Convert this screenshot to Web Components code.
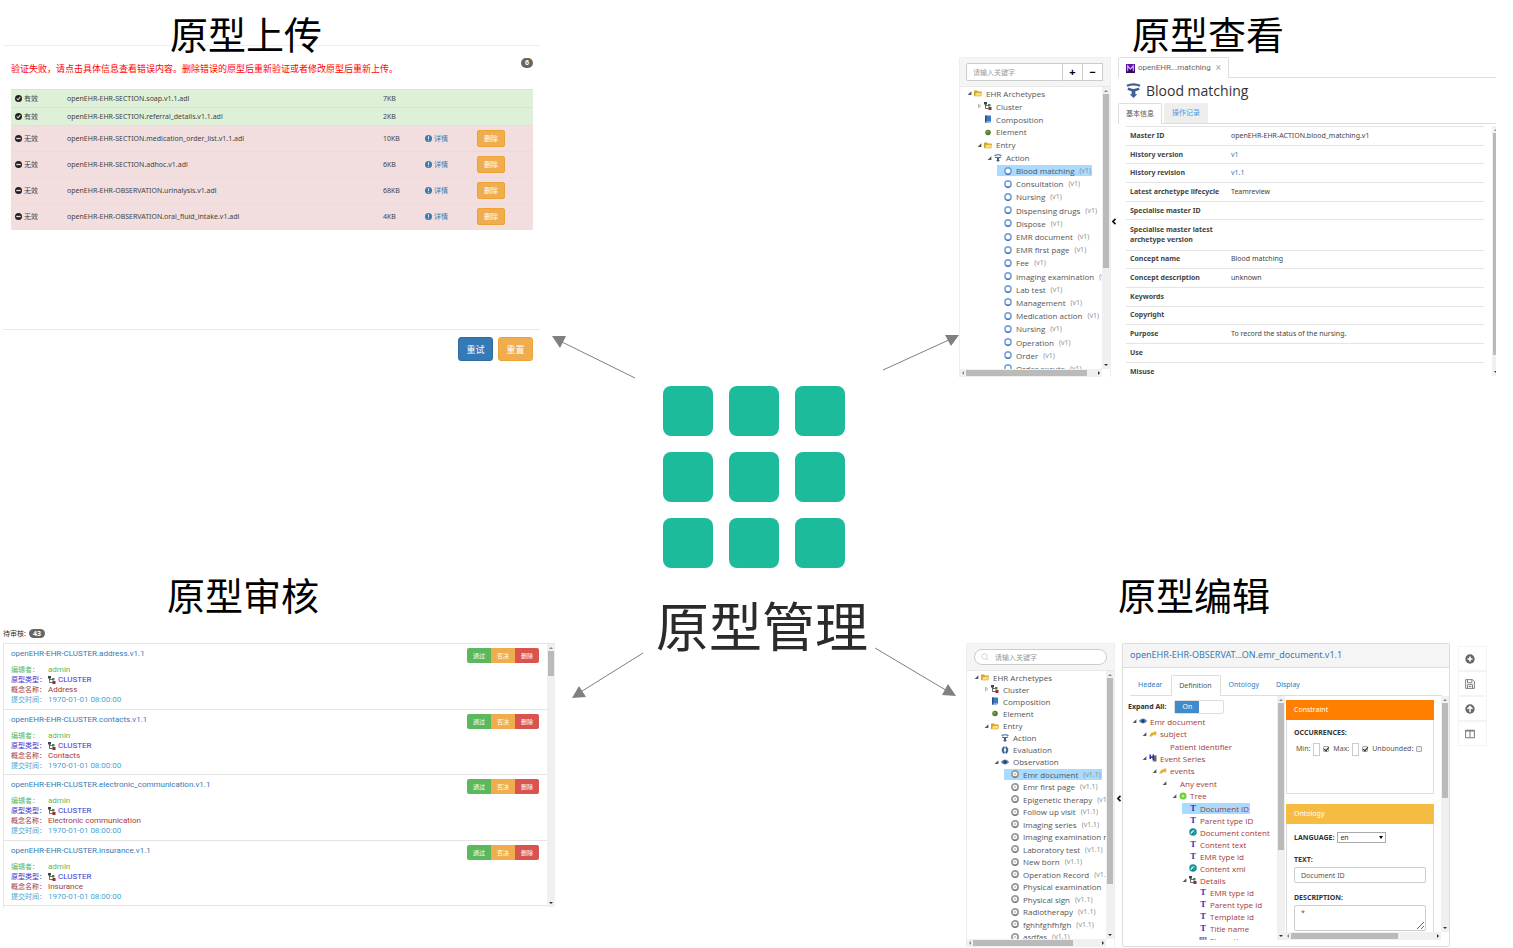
<!DOCTYPE html>
<html lang="zh-CN">
<head>
<meta charset="utf-8">
<title>原型管理</title>
<style>
  body { margin: 0; background: #fff; color: #333; font: 8px/12px "Noto Sans", "Noto Sans CJK SC", sans-serif; }
</style>
</head>
<body>
<archetype-map>
  <upload-panel slot="upload"></upload-panel>
  <view-panel slot="view"></view-panel>
  <app-grid slot="center">原型管理</app-grid>
  <review-panel slot="review"></review-panel>
  <edit-panel slot="edit"></edit-panel>
</archetype-map>

<script>
const BASE = `*{box-sizing:border-box} button,input,select,textarea{font-family:inherit;margin:0} a{color:#337ab7;text-decoration:none}`;

function define(name, css, html) {
  customElements.define(name, class extends HTMLElement {
    connectedCallback() {
      if (this.shadowRoot) return;
      const root = this.attachShadow({ mode: 'open' });
      const t = document.createElement('template');
      t.innerHTML = `<style>${BASE}${css}</style>` + (typeof html === 'function' ? html(this) : html);
      root.append(t.content.cloneNode(true));
    }
  });
}

const ICONS = {
  folder: '<path d="M0 3h6l2 2h7v3H4l-2 6H0z" fill="#d9a520"/><path d="M4 7h12l-2 7H1z" fill="#fbe07a" stroke="#c99a1b" stroke-width="1"/>',
  slot: '<path d="M0 13 5 5h4l1-2h5l-1 8-5-1-3 3z" fill="#f0b93a"/><path d="M2 12l5-5 7-1" stroke="#c98a1b" fill="none"/>',
  cluster: '<path d="M3 2v11h7M3 7h6" stroke="#444" stroke-width="1.6" fill="none"/><rect x="0" y="0" width="6" height="5" fill="#444"/><rect x="8" y="4" width="5" height="5" fill="#3a8a5a"/><rect x="9" y="10" width="6" height="6" fill="#a3262e"/>',
  book: '<path d="M2 1h12v12l-2 2H2z" fill="#3f78bd"/><path d="M2 1h3v14H2z" fill="#234f8c"/><path d="M5 13h8" stroke="#cfe0f4"/>',
  element: '<circle cx="8" cy="9" r="5.500" fill="#4f7a2c"/><circle cx="7" cy="8" r="2.500" fill="#7ea650"/>',
  action: '<path d="M1 3q7-3 14 0M2 6q6 3 12 0" stroke="#3d5f96" stroke-width="2.400" fill="none"/><path d="M6 7h4v5h2l-4 4-4-4h2z" fill="#3d5f96"/>',
  evaluation: '<path d="M6 1Q1 4 2 9t4 6l1-2q-4-5 0-10zM10 1q5 3 4 8t-4 6l-1-2q4-5 0-10z" fill="#27538f" stroke="#27538f"/>',
  eye: '<path d="M0 8q8-9 16 0-8 9-16 0z" fill="#5f87bd" stroke="#5f87bd"/><circle cx="8" cy="8" r="3.500" fill="#1d3e73"/>',
  blue: '<circle cx="8" cy="8" r="6.200" fill="#fff" stroke="#7ba4dc" stroke-width="3.200"/><path d="M3 13a7 7 0 0 0 10 0" stroke="#4a6db0" stroke-width="2" fill="none"/>',
  gray: '<circle cx="8" cy="8" r="6.200" fill="#fff" stroke="#9a9a9a" stroke-width="3.600"/><path d="M3 13a7 7 0 0 0 10 0" stroke="#777" stroke-width="2" fill="none"/><rect x="6" y="6" width="4" height="4" fill="#ccc"/>',
  series: '<path d="M1 1h3v4h3V1h3v12H7V8H4v2H1z" fill="#2230a0"/><path d="M10 3h5v12H8v-2h2z" fill="#666"/>',
  tree: '<circle cx="8" cy="8" r="7" fill="#6ccc3a"/><circle cx="8" cy="8" r="3" fill="#b9f08e"/>',
  text: '<text x="8" y="14" text-anchor="middle" font-family="Liberation Serif, serif" font-weight="bold" font-size="17" fill="#3a2fb0">T</text>',
  web: '<circle cx="8" cy="8" r="7.500" fill="#12939a"/><path d="M3 9q3-6 10-5-2 8-9 8" fill="#bff0e4"/><path d="M6 12l7-8" stroke="#15528c" stroke-width="2"/>',
  grid: '<rect x="1" y="2" width="14" height="12" fill="#6a6fc0"/><path d="M1 6h14M6 2v12M11 2v12" stroke="#fff"/>',
  ok: '<circle cx="8" cy="8" r="8" fill="#222"/><path d="M4 8l3 3 5-6" stroke="#dff0d8" stroke-width="2.400" fill="none"/>',
  minus: '<circle cx="8" cy="8" r="8" fill="#222"/><path d="M3 8h10" stroke="#f2dede" stroke-width="3"/>',
  info: '<circle cx="8" cy="8" r="8" fill="#337ab7"/><path d="M8 3v6M8 11v2" stroke="#f2dede" stroke-width="2.600"/>',
  plus: '<circle cx="8" cy="8" r="7.500" fill="#666"/><path d="M8 4v8M4 8h8" stroke="#fff" stroke-width="2.600"/>',
  up: '<circle cx="8" cy="8" r="7.500" fill="#666"/><path d="M8 13V6M4 8l4-4 4 4" stroke="#fff" stroke-width="2.400" fill="none"/>',
  save: '<path d="M1 1h11l3 3v11H1z" fill="none" stroke="#777" stroke-width="1.500"/><path d="M4 1v5h7V1M4 15V9h8v6M6 12h4" fill="none" stroke="#777" stroke-width="1.500"/>',
  columns: '<path d="M1 2h14v12H1zM8 2v12" fill="none" stroke="#777" stroke-width="1.600"/><path d="M1 3h14" stroke="#777" stroke-width="2"/>',
  chevron: '<path d="M12 1 5 8l7 7" stroke="#111" stroke-width="4.500" fill="none"/>',
  search: '<circle cx="7" cy="7" r="5.500" fill="none" stroke="#bbb" stroke-width="1.200"/><path d="M11 11l4 4" stroke="#bbb" stroke-width="1.200"/>',
  model: '<rect width="16" height="16" fill="#5a18a8"/><path d="M0 9h16v7H0z" fill="#2c0a5c"/><path d="M3 13V3l5 6 5-6v10" stroke="#d9a8ff" stroke-width="2" fill="none"/>',
  open: '<path d="M14 2v12H2z" fill="#555"/>',
  closed: '<path d="M5 2l7 6-7 6z" fill="none" stroke="#888" stroke-width="2"/>'
};

define('ui-icon',
  `:host{display:block;flex:none;width:8px;height:8px} svg{display:block;width:100%;height:100%}`,
  el => `<svg viewBox="0 0 16 16" aria-hidden="true">${ICONS[el.getAttribute('name')] || ''}</svg>`);

define('scroll-bar',
  `:host{display:flex;flex-direction:column;flex:none;width:8px;background:#f0f0f0}
   :host([across]){flex-direction:row;width:auto;height:8px}
   .track{flex:1;display:flex;flex-direction:column;min-height:0;padding:0 1px}
   :host([across]) .track{flex-direction:row;padding:1px 0}
   .thumb{background:#bababa;flex:none;height:var(--len)}
   :host([across]) .thumb{height:auto;width:var(--len)}
   svg{display:block;flex:none;width:8px;height:7px}
   :host([across]) svg{width:6px;height:8px}`,
  el => el.hasAttribute('across')
    ? `<svg viewBox="0 0 6 8"><path d="M4 2v4L2 4z" fill="#888"/></svg><div class="track"><div class="thumb"></div></div><svg viewBox="0 0 6 8"><path d="M2 2v4l2-2z" fill="#333"/></svg>`
    : `<svg viewBox="0 0 8 7"><path d="M2 5h4L4 3z" fill="#888"/></svg><div class="track"><div class="thumb"></div></div><svg viewBox="0 0 8 7"><path d="M2 2h4L4 4z" fill="#333"/></svg>`);

define('map-title',
  `:host{display:block} h2{margin:0;height:54px;font:38px/48px "Noto Sans CJK SC",sans-serif;color:#000;white-space:nowrap}`,
  '<h2><slot></slot></h2>');

define('archetype-map',
  `:host{display:grid;position:relative;grid-template-columns:555fr 404fr 554fr;grid-template-rows:1fr auto;min-height:100vh}
   .center{grid-area:1/2/3/3;padding-top:386px}
   .left{grid-column:1}.right{grid-column:3}
   .top{grid-row:1}.bottom{grid-row:2}
   div{min-width:0}
   svg{position:absolute;inset:0;width:100%;height:100%;pointer-events:none}`,
  `<div class="left top"><slot name="upload"></slot></div>
   <div class="right top"><slot name="view"></slot></div>
   <div class="center"><slot name="center"></slot></div>
   <div class="left bottom"><slot name="review"></slot></div>
   <div class="right bottom"><slot name="edit"></slot></div>
   <svg viewBox="0 0 1513 948" aria-hidden="true"><g stroke="#808080" fill="none"><path d="M635 378 560 341M883 370l68-31M643 653l-64 40M875 648l74 44"/></g>
   <g fill="#808080"><path d="M552 336h14l-6 12zM959 335h-14l6 11zM572 698l7-12 7 11zM956 696l-8-12-6 11z"/></g></svg>`);

define('app-grid',
  `:host{display:flex;flex-direction:column;align-items:center;padding-right:6px}
   .tiles{display:grid;grid-template-columns:repeat(3,50px);grid-auto-rows:50px;gap:16px}
   i{background:#1cbb9b;border-radius:8px}
   h1{margin:20px 0 0;padding-left:16px;font:53px/72px "Noto Sans CJK SC",sans-serif;color:#2b2b2b;white-space:nowrap}`,
  `<div class="tiles">${'<i></i>'.repeat(9)}</div><h1><slot></slot></h1>`);

const FILES = [
  ['openEHR-EHR-SECTION.soap.v1.1.adl', '7KB', 1],
  ['openEHR-EHR-SECTION.referral_details.v1.1.adl', '2KB', 1],
  ['openEHR-EHR-SECTION.medication_order_list.v1.1.adl', '10KB', 0],
  ['openEHR-EHR-SECTION.adhoc.v1.adl', '6KB', 0],
  ['openEHR-EHR-OBSERVATION.urinalysis.v1.adl', '68KB', 0],
  ['openEHR-EHR-OBSERVATION.oral_fluid_intake.v1.adl', '4KB', 0]
];

define('upload-panel',
  `:host{display:block;padding:0 15px 0 3px}
   map-title{height:45px;padding:9px 0 0 167px}
   .box{border-top:1px solid #eee;border-bottom:1px solid #e8e8e8;height:285px;padding:10px 7px 0 8px}
   .msg{display:flex;justify-content:space-between;align-items:flex-start;height:33px}
   p{margin:4px 0 0;font-size:9px;line-height:18px;color:#f00}
   .badge{background:#666;color:#fff;border-radius:5px;font:bold 7px/10px "Noto Sans",sans-serif;padding:0 4px;margin-top:2px}
   table{width:100%;border-collapse:collapse;table-layout:fixed;font-size:7px;line-height:10px;color:#444}
   td{padding:0;border-top:1px solid #ddd;height:26px}
   .ok td{background:#dff0d8;height:18px;border-color:#d0e9c6}
   .bad td{background:#f2dede;border-color:#e6dcdc}
   .st{display:flex;align-items:center;gap:2px;padding-left:4px}
   .st ui-icon{width:7px;height:7px}
   a{display:flex;align-items:center;gap:2px}
   a ui-icon{width:7px;height:7px}
   button{border:1px solid #eea236;background:#f0ad4e;color:#fff;border-radius:2px;padding:0}
   td button{display:block;width:28px;height:17px;font-size:7px;line-height:10px}
   .actions{display:flex;justify-content:flex-end;gap:5px;padding:7px 7px 0}
   .actions button{width:35px;height:24px;font-size:9px;border-radius:3px}
   .actions .primary{background:#337ab7;border-color:#2e6da4}`,
  `<map-title>原型上传</map-title>
   <div class="box">
    <div class="msg"><p>验证失败，请点击具体信息查看错误内容。删除错误的原型后重新验证或者修改原型后重新上传。</p><span class="badge">6</span></div>
    <table><colgroup><col style="width:56px"><col><col style="width:42px"><col style="width:52px"><col style="width:56px"></colgroup>
    ${FILES.map(([n, s, ok]) => `<tr class="${ok ? 'ok' : 'bad'}"><td><span class="st"><ui-icon name="${ok ? 'ok' : 'minus'}"></ui-icon>${ok ? '有效' : '无效'}</span></td><td>${n}</td><td>${s}</td><td>${ok ? '' : '<a href="#"><ui-icon name="info"></ui-icon>详情</a>'}</td><td>${ok ? '' : '<button type="button">删除</button>'}</td></tr>`).join('')}
    </table>
   </div>
   <div class="actions"><button type="button" class="primary">重试</button><button type="button">重置</button></div>`);

/* A tree row: [level, caret, icon, label, version, selected] */
const treeRow = ([lv, caret, icon, label, ver, sel]) =>
  `<li style="padding-left:${lv * 10}px"><span class="row${sel ? ' sel' : ''}"><ui-icon class="caret" name="${caret}"></ui-icon><ui-icon name="${icon}"></ui-icon><span class="label">${label}</span>${ver ? `<small>${ver}</small>` : ''}</span></li>`;
const TREE_CSS = `
   ul{list-style:none;margin:0;padding:0;display:flex;flex-direction:column;font-family:"Open Sans",sans-serif}
   li{flex:1 0 0;min-height:0;display:flex;align-items:center;white-space:nowrap}
   .row{display:flex;align-items:center;height:11px;line-height:11px;padding-right:1px}
   .row .caret{width:5px;height:6px;margin-right:2px}
   .row .label{margin-left:4px}
   .sel{background:#a8dbff}
   small{font-size:7px;color:#888;margin-left:5px}`;

const VIEW_TOP = [[0,'open','folder','EHR Archetypes'],[1,'closed','cluster','Cluster'],[1,'','book','Composition'],[1,'','element','Element'],[1,'open','folder','Entry'],[2,'open','action','Action']];
const VIEW_LEAF = ['Blood matching','Consultation','Nursing','Dispensing drugs','Dispose','EMR document','EMR first page','Fee','Imaging examination','Lab test','Management','Medication action','Nursing','Operation','Order','Order excute'].map((n, i) => [3,'','blue',n,'(v1)',i === 0]);
const EDIT_TOP = [[0,'open','folder','EHR Archetypes'],[1,'closed','cluster','Cluster'],[1,'','book','Composition'],[1,'','element','Element'],[1,'open','folder','Entry'],[2,'','action','Action'],[2,'','evaluation','Evaluation'],[2,'open','eye','Observation']];
const EDIT_LEAF = ['Emr document','Emr first page','Epigenetic therapy','Follow up visit','Imaging series','Imaging examination re','Laboratory test','New born','Operation Record','Physical examination','Physical sign','Radiotherapy','fghhfghfhfgh','asdfas'].map((n, i) => [3,'','gray',n,i === 5 ? '' : '(v1.1)',i === 0]);

define('tree-panel',
  `:host{display:flex;flex-direction:column;border:1px solid #eee;border-bottom:0;border-radius:2px 2px 0 0;color:#555}
   header{flex:none;background:#f5f5f5;border-bottom:1px solid #e8e8e8}
   .body{flex:1;display:flex;min-height:0}
   .view{flex:1;min-width:0;overflow:hidden;padding-left:7px}
   ${TREE_CSS}
   .g1{height:var(--g1)} .g2{height:var(--g2)}`,
  el => {
    const edit = el.hasAttribute('edit');
    return `<header><slot></slot></header><div class="body"><div class="view">
      <ul class="g1">${(edit ? EDIT_TOP : VIEW_TOP).map(treeRow).join('')}</ul>
      <ul class="g2">${(edit ? EDIT_LEAF : VIEW_LEAF).map(treeRow).join('')}</ul></div>
      <scroll-bar style="--len:${edit ? 81 : 65}%"></scroll-bar></div>
      <scroll-bar across style="--len:${edit ? 79 : 93}%;margin-right:8px"></scroll-bar>`;
  });

const META = [
  ['Master ID','openEHR-EHR-ACTION.blood_matching.v1'],['History version','<a href="#">v1</a>'],['History revision','<a href="#">v1.1</a>'],
  ['Latest archetype lifecycle','Teamreview'],['Specialise master ID',''],['Specialise master latest archetype version',''],
  ['Concept name','Blood matching'],['Concept description','unknown'],['Keywords',''],['Copyright',''],
  ['Purpose','To record the status of the nursing.'],['Use',''],['Misuse','']
];

define('view-panel',
  `:host{display:block;padding-right:17px}
   map-title{height:57px;padding:9px 0 0 173px}
   .cols{display:flex;height:320px}
   tree-panel{flex:0 0 152px;min-width:0;--g1:77px;--g2:211px}
   .find{display:flex;height:28px;padding:5px 7px 5px 6px}
   .find input{flex:1;min-width:0;border:1px solid #ccc;border-radius:2px 0 0 2px;font-size:7px;padding:0 6px;background:#fff}
   input::placeholder{color:#999}
   .find button{width:20px;border:1px solid #ccc;border-left:0;background:#fff;padding:0;font:bold 11px/14px "Noto Sans",sans-serif;color:#000}
   .split{flex:none;width:7px;display:flex;align-items:center;padding-top:8px}
   .split ui-icon{width:6px;height:7px}
   .main{flex:1;min-width:0;display:flex;flex-direction:column;height:319px}
   .file{display:flex;height:21px;border-bottom:1px solid #ddd;flex:none;font-family:Roboto,sans-serif}
   .file a{display:flex;align-items:center;gap:3px;border:1px solid #ddd;border-bottom:0;background:#fff;height:21px;padding:0 7px;color:#666;border-radius:2px 2px 0 0}
   .file b{font-weight:400;font-size:10px;color:#aaa;margin-left:2px}
   h3{display:flex;align-items:center;gap:5px;margin:0;font:14px/25px "Open Sans",sans-serif;color:#333;padding-left:8px;flex:none}
   h3 ui-icon{width:15px;height:15px}
   nav{display:flex;gap:2px;height:21px;border-bottom:1px solid #ddd;flex:none}
   nav a{width:44px;text-align:center;font-size:7px;line-height:20px;height:20px;background:#eee;color:#4a9ce0;border-radius:2px 2px 0 0}
   nav a.on{background:#fff;color:#555;border:1px solid #ddd;border-bottom:0;height:21px}
   .scroll{flex:1;min-height:0;display:flex;margin-top:2px}
   .data{flex:1;min-width:0;overflow:hidden;padding:0 8px}
   table{width:100%;height:255px;border-collapse:collapse;font-size:7px;line-height:10px;color:#444}
   th{width:105px;text-align:left;padding:0 4px;border-top:1px solid #e4e4e4}
   td{padding:0;border-top:1px solid #e4e4e4}
   .side{width:4px;overflow:hidden;flex:none}
   .side scroll-bar{height:100%}`,
  `<map-title>原型查看</map-title>
   <div class="cols">
    <tree-panel><div class="find"><input type="text" placeholder="请输入关键字" aria-label="关键字"><button type="button">+</button><button type="button">−</button></div></tree-panel>
    <div class="split"><ui-icon name="chevron"></ui-icon></div>
    <div class="main">
     <div class="file"><a href="#"><ui-icon name="model" style="width:9px;height:9px"></ui-icon>openEHR...matching <b>×</b></a></div>
     <h3><ui-icon name="action"></ui-icon>Blood matching</h3>
     <nav><a href="#" class="on">基本信息</a><a href="#">操作记录</a></nav>
     <div class="scroll"><div class="data"><table>${META.map(([k, v], i) => `<tr style="height:${i === 5 ? 29 : 18}px"><th scope="row">${k}</th><td>${v}</td></tr>`).join('')}</table></div>
     <div class="side"><scroll-bar style="--len:94%"></scroll-bar></div></div>
    </div>
   </div>`);

const REVIEWS = [['address','Address'],['contacts','Contacts'],['electronic_communication','Electronic communication'],['insurance','Insurance']];

define('review-panel',
  `:host{display:block;padding-left:3px}
   map-title{padding-left:164px}
   .count{display:flex;align-items:center;gap:3px;height:19px;font-size:7px}
   .count b{background:#666;color:#fff;border-radius:5px;font-size:7px;line-height:9px;padding:0 4px}
   .list{display:flex;height:265px;border:1px solid #e4e4e4;border-right:0;border-bottom-color:transparent;font-family:Roboto,"Noto Sans CJK SC",sans-serif}
   .items{flex:1;display:flex;flex-direction:column}
   article{flex:0 0 66px;display:flex;justify-content:space-between;align-items:flex-start;border-bottom:1px solid #e4e4e4;padding:4px 8px 0 7px}
   article:nth-child(even){flex-basis:65px}
   .name{display:block;font-size:8px;line-height:11px;margin-bottom:6px}
   dl{margin:0;display:grid;grid-template-columns:37px auto;line-height:10px;font-size:8px}
   dt{font-size:7px} dd{margin:0;display:flex;align-items:center;gap:2px}
   .g{color:#5cb85c}.b{color:#3b35d0}.r{color:#a33a3a}.c{color:#46a5d4}
   .btns{display:flex}
   button{border:0;width:24px;height:15px;color:#fff;font-size:6px;line-height:15px;padding:0;background:#5cb85c;border-radius:2px 0 0 2px}
   button+button{background:#f0ad4e;border-radius:0}
   button+button+button{background:#d9534f;border-radius:0 2px 2px 0}`,
  `<map-title>原型审核</map-title>
   <div class="count">待审核: <b>43</b></div>
   <div class="list"><div class="items">${REVIEWS.map(([id, n]) => `<article><div><a class="name" href="#">openEHR-EHR-CLUSTER.${id}.v1.1</a>
     <dl><dt class="g">编辑者：</dt><dd class="g">admin</dd><dt class="b">原型类型：</dt><dd class="b"><ui-icon name="cluster"></ui-icon>CLUSTER</dd><dt class="r">概念名称：</dt><dd class="r">${n}</dd><dt class="c">提交时间：</dt><dd class="c">1970-01-01 08:00:00</dd></dl></div>
     <div class="btns"><button type="button">通过</button><button type="button">否决</button><button type="button">删除</button></div></article>`).join('')}</div>
   <scroll-bar style="--len:10%"></scroll-bar></div>`);

const DEF_TOP = [[0,'open','eye','Emr document'],[1,'open','slot','subject'],[2,'','','Patient identifier'],[1,'open','series','Event Series'],[2,'open','slot','events'],[3,'open','','Any event'],[4,'open','tree','Tree']];
const DEF_LEAF = [[5,'','text','Document ID','',true],[5,'','text','Parent type ID'],[5,'','web','Document content'],[5,'','text','Content text'],[5,'','text','EMR type id'],[5,'','web','Content xml'],[5,'open','cluster','Details'],[6,'','text','EMR type id'],[6,'','text','Parent type id'],[6,'','text','Template id'],[6,'','text','Title name'],[6,'','grid','Share time']];

define('definition-tree',
  `:host{display:block;overflow:hidden;color:#a33a3a}
   .exp{display:flex;align-items:flex-end;gap:8px;height:19px;padding:0 0 1px 5px;font-weight:bold;font-size:7px;line-height:14px;color:#333}
   .sw{display:flex;width:50px;height:14px;border:1px solid #ddd;border-radius:2px;padding:0;background:#fff;font-size:7px;line-height:12px;color:#fff}
   .sw span{width:24px;background:#428bca}
   ${TREE_CSS}
   ul{padding-left:9px}
   .row .label{margin-left:3px}
   .g1{height:87px}.g2{height:144px}`,
  `<div class="exp"><span id="e">Expand All:</span><button class="sw" type="button" role="switch" aria-checked="true" aria-labelledby="e"><span>On</span></button></div>
   <ul class="g1">${DEF_TOP.map(treeRow).join('')}</ul><ul class="g2">${DEF_LEAF.map(treeRow).join('')}</ul>`);

define('form-card',
  `:host{display:block;border:1px solid #ddd;border-top:0}
   h4{margin:0 -1px;font:7px/20px "Noto Sans",sans-serif;color:#fff;padding-left:8px;background:var(--head)}
   div{padding:8px 7px 0}`,
  el => `<h4>${el.getAttribute('heading')}</h4><div><slot></slot></div>`);

define('edit-panel',
  `:host{display:block;padding:0 26px 1px 7px}
   map-title{padding:0 0 19px 152px}
   .cols{display:flex;height:304px}
   tree-panel{flex:0 0 149px;min-width:0;--g1:97px;--g2:175px}
   .find{display:flex;align-items:center;position:relative;height:26px;padding:5px 7px}
   .find input{flex:1;min-width:0;height:16px;border:1px solid #ccc;border-radius:8px;font-size:7px;padding:0 20px;background:#fff}
   .find ui-icon{position:absolute;left:14px;top:9px}
   input::placeholder{color:#999}
   .split{flex:none;width:7px;display:flex;align-items:center;padding:6px 0 0 1px}
   .split ui-icon{width:6px;height:7px}
   .card{flex:1;min-width:0;display:flex;flex-direction:column;border:1px solid #ddd;border-radius:2px}
   header{flex:none;background:#f5f5f5;border-bottom:1px solid #ddd;height:24px;padding-left:7px;font-size:9px;line-height:21px;color:#337ab7}
   nav{flex:none;display:flex;height:28px;padding:7px 7px 0;font-size:7px;line-height:20px}
   nav a{padding:0 9px 0 8px;border-bottom:1px solid #ddd}
   nav a.on{color:#555;border:1px solid #ddd;border-bottom:0;border-radius:2px 2px 0 0;line-height:19px;padding:0 8px 0 7px}
   nav i{flex:1;border-bottom:1px solid #ddd}
   .work{flex:1;min-height:0;display:flex;margin-bottom:6px}
   definition-tree{flex:1;min-width:0}
   .forms{flex:0 0 156px;display:flex;flex-direction:column;min-width:0}
   .pane{flex:1;min-height:0;overflow:hidden;padding:4px 7px 0 1px}
   .first{height:94px;--head:#ff8000}
   .second{margin-top:10px;height:140px;--head:#f5bc41}
   .cap{display:block;font-size:7px;line-height:10px;font-weight:bold;color:#333}
   .line{display:flex;align-items:center;font-size:7px;gap:3px;margin-top:5px;padding-left:2px;height:12px;color:#555}
   .num{width:7px;height:13px;border:1px solid #ccc;padding:0}
   .gap{margin-left:1px}
   [type=checkbox]{appearance:none;width:6px;height:6px;border:1px solid #aaa;border-radius:1px;background:#eee;display:block;flex:none}
   [type=checkbox]:checked::after{content:"";display:block;width:2px;height:4px;margin-left:1px;margin-top:-1px;border:solid #222;border-width:0 1px 1px 0;transform:rotate(40deg)}
   .lang{display:flex;align-items:center;gap:3px;margin:0 0 12px}
   select{appearance:none;display:block;width:49px;height:11px;border:1px solid #aaa;border-radius:0;background:#fff;font-size:7px;line-height:9px;padding:0 2px;color:#333}
   .sel{position:relative;display:block;height:11px}
   .sel::after{content:"";position:absolute;right:3px;top:4px;border:solid transparent;border-width:3px 2px 0;border-top-color:#000}
   .text{display:block;width:100%;height:16px;border:1px solid #ccc;border-radius:2px;font-size:7px;line-height:10px;padding:0 6px;color:#555;margin:2px 0 10px}
   textarea.text{height:26px;resize:vertical;padding:2px 6px;margin-bottom:0}
   .tools{flex:none;margin:3px 0 0 8px;width:29px;display:flex;flex-direction:column}
   .tools button{height:25px;border:1px solid #f4f4f4;background:#fff;padding:0 0 0 6px}
   .tools ui-icon{width:10px;height:10px}`,
  `<map-title>原型编辑</map-title>
   <div class="cols">
    <tree-panel edit><div class="find"><input type="search" placeholder="请输入关键字" aria-label="关键字"><ui-icon name="search"></ui-icon></div></tree-panel>
    <div class="split"><ui-icon name="chevron"></ui-icon></div>
    <section class="card">
     <header>openEHR-EHR-OBSERVAT...ON.emr_document.v1.1</header>
     <nav><a href="#">Hedear</a><a href="#" class="on">Definition</a><a href="#">Ontology</a><a href="#">Display</a><i></i></nav>
     <div class="work">
      <definition-tree></definition-tree>
      <scroll-bar style="--len:64%"></scroll-bar>
      <div class="forms"><div class="pane">
        <form-card class="first" heading="Constraint"><span class="cap">OCCURRENCES:</span>
         <div class="line"><label for="mn">Min:</label><input class="num" id="mn"><input type="checkbox" checked aria-label="Min"><label class="gap" for="mx">Max:</label><input class="num" id="mx"><input type="checkbox" checked aria-label="Max"><label class="gap" for="ub">Unbounded:</label><input type="checkbox" id="ub"></div></form-card>
        <form-card class="second" heading="Ontology">
         <div class="lang"><label class="cap" for="lg">LANGUAGE:</label><span class="sel"><select id="lg"><option>en</option></select></span></div>
         <label class="cap" for="tx">TEXT:</label><input class="text" id="tx" value="Document ID">
         <label class="cap" for="ds">DESCRIPTION:</label><textarea class="text" id="ds">*</textarea></form-card>
       </div><scroll-bar across style="--len:74%"></scroll-bar></div>
      <scroll-bar style="--len:43%;margin-bottom:8px"></scroll-bar>
     </div>
    </section>
    <div class="tools"><button type="button" aria-label="Add"><ui-icon name="plus"></ui-icon></button><button type="button" aria-label="Save"><ui-icon name="save"></ui-icon></button><button type="button" aria-label="Submit"><ui-icon name="up"></ui-icon></button><button type="button" aria-label="Columns"><ui-icon name="columns"></ui-icon></button></div>
   </div>`);
</script>
</body>
</html>
